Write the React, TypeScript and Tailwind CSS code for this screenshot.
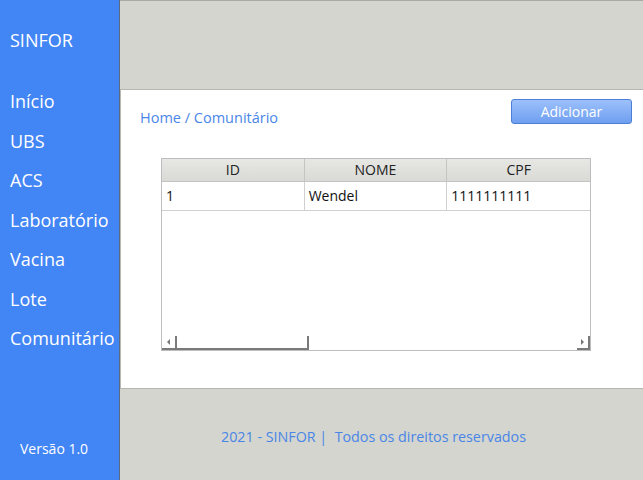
const menu = ["Início", "UBS", "ACS", "Laboratório", "Vacina", "Lote", "Comunitário"];

const rows = [{ id: "1", nome: "Wendel", cpf: "1111111111" }];

export default function App() {
  return (
    <div
      className="flex h-[480px] w-[643px] overflow-hidden bg-[#d3d5ce]"
      style={{ fontFamily: '"Open Sans", "DejaVu Sans", sans-serif' }}
    >
      <aside className="flex w-[120px] shrink-0 flex-col border-r border-[#5a6a80] bg-[#4285f4] text-white">
        <div className="pl-[10px] pt-[29px] text-[18px] leading-[22px]">SINFOR</div>
        <nav className="mt-[39px] flex flex-col">
          {menu.map((m) => (
            <div key={m} className="h-[39.5px] pl-[10px] text-[18px] leading-[22px]">
              {m}
            </div>
          ))}
        </nav>
        <div className="mt-auto pb-[22px] pl-[20px] text-[14px] leading-[18px]">Versão 1.0</div>
      </aside>

      <main className="flex flex-1 flex-col border-t border-[#a8aaa4]">
        <div className="h-[88px]" />
        <section className="h-[300px] border-y border-l border-[#b5b7b0] bg-white">
          <div className="flex items-start justify-between pl-[19px] pr-[11px] pt-[9px]">
            <span className="mt-[10px] text-[14.5px] leading-[18px] text-[#4a86e8]">Home / Comunitário</span>
            <button className="h-[25px] w-[121px] rounded-[3px] border border-[#4d7fd6] bg-gradient-to-b from-[#9cc0fb] to-[#6f9ff0] text-[14px] leading-[18px] text-white">
              Adicionar
            </button>
          </div>
          <div className="ml-[40px] mt-[31px] flex h-[193px] w-[430px] flex-col border border-[#bdbdbd]">
            <div className="grid h-[23px] grid-cols-3 border-b border-[#c4c4c4] bg-gradient-to-b from-[#e7e7e4] to-[#d9d9d5] text-[14px] leading-[22px] text-[#222]">
              <div className="border-r border-[#c4c4c4] text-center">ID</div>
              <div className="border-r border-[#c4c4c4] text-center">NOME</div>
              <div className="text-center">CPF</div>
            </div>
            {rows.map((r) => (
              <div key={r.id} className="grid h-[29px] grid-cols-3 border-b border-[#d0d0d0] text-[14px] leading-[28px] text-[#111]">
                <div className="border-r border-[#d0d0d0] pl-[4px]">{r.id}</div>
                <div className="border-r border-[#d0d0d0] pl-[4px]">{r.nome}</div>
                <div className="pl-[4px]">{r.cpf}</div>
              </div>
            ))}
            <div className="flex-1" />
            <div className="flex h-[14px] items-end">
              <div className="flex h-[14px] w-[13px] items-center justify-center border-b-2 border-[#7a7a7a]">
                <span className="h-0 w-0 border-y-[3px] border-r-[3px] border-y-transparent border-r-[#777]" />
              </div>
              <div className="h-[14px] w-[134px] border-x-2 border-b-2 border-[#7a7a7a]" />
              <div className="flex-1" />
              <div className="flex h-[14px] w-[13px] items-center justify-center border-b-2 border-r-2 border-[#7a7a7a]">
                <span className="h-0 w-0 border-y-[3px] border-l-[3px] border-y-transparent border-l-[#777]" />
              </div>
            </div>
          </div>
        </section>
        <footer className="flex flex-1 items-start justify-center pr-[16px] pt-[39px] text-[14.3px] leading-[18px] text-[#4a86e8]">
          2021 - SINFOR |&nbsp; Todos os direitos reservados
        </footer>
      </main>
    </div>
  );
}
